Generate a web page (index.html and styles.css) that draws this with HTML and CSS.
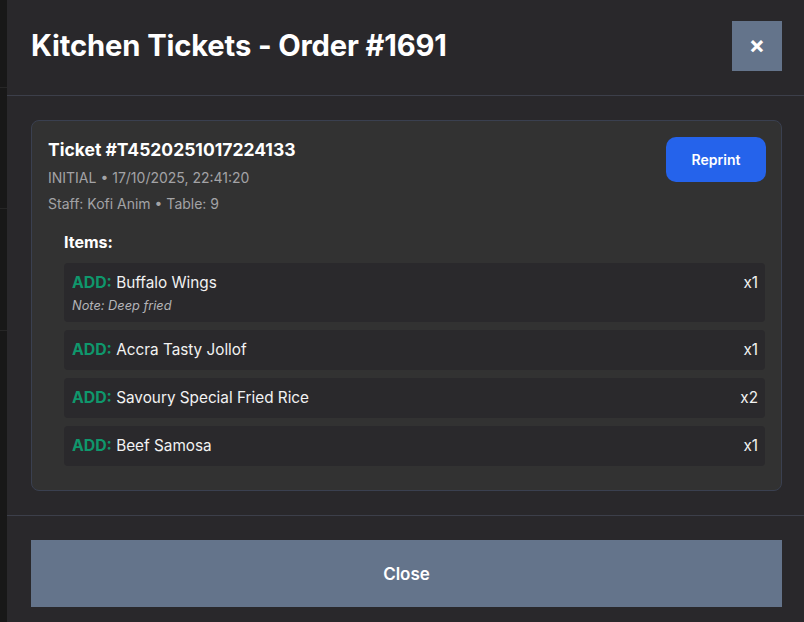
FILE: index.html
```html
<!DOCTYPE html>
<html>
<head>
<meta charset="utf-8">
<link rel="stylesheet" href="styles.css">
</head>
<body>
<div class="page">
  <div class="backdrop">
    <div class="bd-line l1"></div>
    <div class="bd-line l2"></div>
    <div class="bd-line l3"></div>
  </div>
  <div class="modal">
    <header class="modal-header">
      <h1 class="modal-title">Kitchen Tickets - Order #1691</h1>
      <button class="icon-close">×</button>
    </header>
    <div class="modal-body">
      <section class="ticket">
        <div class="ticket-top">
          <div class="ticket-info">
            <div class="ticket-id">Ticket #T4520251017224133</div>
            <div class="ticket-meta">INITIAL • 17/10/2025, 22:41:20</div>
            <div class="ticket-meta">Staff: Kofi Anim • Table: 9</div>
          </div>
          <button class="btn-reprint">Reprint</button>
        </div>
        <div class="items">
          <div class="items-label">Items:</div>
          <div class="item">
            <div class="item-main">
              <div class="item-name"><span class="tag">ADD:</span> Buffalo Wings</div>
              <div class="item-note">Note: Deep fried</div>
            </div>
            <div class="item-qty">x1</div>
          </div>
          <div class="item">
            <div class="item-main">
              <div class="item-name"><span class="tag">ADD:</span> Accra Tasty Jollof</div>
            </div>
            <div class="item-qty">x1</div>
          </div>
          <div class="item">
            <div class="item-main">
              <div class="item-name"><span class="tag">ADD:</span> Savoury Special Fried Rice</div>
            </div>
            <div class="item-qty">x2</div>
          </div>
          <div class="item">
            <div class="item-main">
              <div class="item-name"><span class="tag">ADD:</span> Beef Samosa</div>
            </div>
            <div class="item-qty">x1</div>
          </div>
        </div>
      </section>
    </div>
    <footer class="modal-footer">
      <button class="btn-close">Close</button>
    </footer>
  </div>
</div>
</body>
</html>
```

FILE: styles.css
```css
* { box-sizing: border-box; }
html, body {
  margin: 0;
  padding: 0;
  width: 804px;
  height: 622px;
  overflow: hidden;
  background: #181818;
  font-family: Inter, "Noto Sans", "Liberation Sans", sans-serif;
  color: #ffffff;
}
.page {
  display: flex;
  width: 804px;
  height: 622px;
}
.backdrop {
  width: 7px;
  flex: 0 0 7px;
  background: #181818;
  position: relative;
}
.bd-line {
  position: absolute;
  left: 0;
  width: 7px;
  height: 1px;
  background: #262626;
}
.l1 { top: 87px; }
.l2 { top: 208px; }
.l3 { top: 330px; }
.modal {
  flex: 0 0 799px;
  width: 799px;
  background: #29282b;
  display: flex;
  flex-direction: column;
}
.modal > * { flex-shrink: 0; }
.modal-header {
  display: flex;
  align-items: center;
  justify-content: space-between;
  padding: 21px 24px 24px 24px;
  border-bottom: 1px solid #3c3f4a;
  height: 96px;
}
.modal-title {
  margin: 0;
  font-size: 29.2px;
  font-weight: 700;
  line-height: 36px;
  letter-spacing: -0.15px;
}
.icon-close {
  width: 50px;
  height: 50px;
  border: none;
  background: #64748b;
  color: #fff;
  font-family: inherit;
  font-size: 24px;
  font-weight: 700;
  line-height: 1;
  padding: 0 0 2px 0;
}
.modal-body {
  padding: 24px;
  border-bottom: 1px solid #3c3f4a;
}
.ticket {
  background: #323232;
  border: 1px solid #3a4050;
  border-radius: 8px;
  padding: 16px;
}
.ticket-top {
  display: flex;
  justify-content: space-between;
  align-items: flex-start;
}
.ticket-id {
  font-size: 17.5px;
  font-weight: 700;
  line-height: 26px;
  margin-bottom: 2px;
}
.ticket-meta {
  font-size: 14px;
  color: #a3a3a6;
  line-height: 26px;
}
.btn-reprint {
  width: 100px;
  height: 45px;
  border: none;
  border-radius: 10px;
  background: #2563eb;
  color: #fff;
  font-family: inherit;
  font-size: 14px;
  font-weight: 600;
  margin-right: -1px;
}
.items {
  padding: 0 0 0 16px;
  margin-top: 13px;
}
.items-label {
  font-size: 16px;
  font-weight: 700;
  line-height: 24px;
  margin-bottom: 9px;
}
.item {
  display: flex;
  justify-content: space-between;
  align-items: flex-start;
  background: #2a292c;
  border-radius: 4px;
  padding: 8px;
  margin-bottom: 8px;
}
.item-name {
  font-size: 15.3px;
  line-height: 24px;
  color: #f2f2f2;
}
.tag {
  color: #0f976c;
  font-weight: 700;
  font-size: 15.8px;
}
.item-note {
  font-size: 12.8px;
  font-style: italic;
  color: #b4b4b8;
  line-height: 17px;
  margin-top: 2px;
}
.item-qty {
  font-size: 15.3px;
  line-height: 24px;
  color: #f2f2f2;
  margin-right: -1px;
}
.modal-footer {
  padding: 24px;
}
.btn-close {
  width: 100%;
  height: 67px;
  border: none;
  background: #64748b;
  color: #fff;
  font-family: inherit;
  font-size: 17px;
  font-weight: 600;
}
```
